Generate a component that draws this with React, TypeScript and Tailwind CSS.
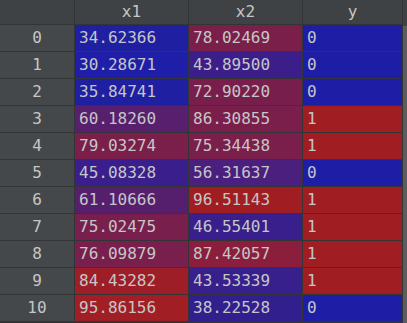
import React from "react";

type Row = [number, string, string, string, string, number];

const BLUE = "#1d1da6";
const RED = "#a01e22";

const rows: Row[] = [
  [0, "34.62366", "#1f1fa2", "78.02469", "#7a1e4a", 0],
  [1, "30.28671", "#1e1ea8", "43.89500", "#3c1e8a", 0],
  [2, "35.84741", "#1f1fa2", "72.90220", "#781e4c", 0],
  [3, "60.18260", "#571f6e", "86.30855", "#7a1f4c", 1],
  [4, "79.03274", "#7a1e4a", "75.34438", "#7a1f4c", 1],
  [5, "45.08328", "#3a1e8c", "56.31637", "#4a1f7e", 0],
  [6, "61.10666", "#561f6e", "96.51143", "#a01e22", 1],
  [7, "75.02475", "#781f4e", "46.55401", "#381f8c", 1],
  [8, "76.09879", "#781f4e", "87.42057", "#8a1e3c", 1],
  [9, "84.43282", "#9e1e28", "43.53339", "#371f8c", 1],
  [10, "95.86156", "#a01e24", "38.22528", "#321f8e", 0],
];

export default function App() {
  return (
    <div
      className="w-[407px] h-[323px] bg-[#3b3e40] flex text-[16px] text-[#c6c6c6] overflow-hidden"
      style={{ fontFamily: '"DejaVu Sans Mono", monospace' }}
    >
      <div className="w-[403px] h-[323px] bg-[#323436]">
        <div className="grid grid-cols-[74px_113px_113px_99px] gap-px pr-px">
          <div className="h-[24px] bg-[#3f4244]" />
          <div className="h-[24px] bg-[#3f4244] flex items-center justify-center leading-none">x1</div>
          <div className="h-[24px] bg-[#3f4244] flex items-center justify-center leading-none">x2</div>
          <div className="h-[24px] bg-[#3f4244] flex items-center justify-center leading-none">y</div>
          {rows.map((r) => (
            <React.Fragment key={r[0]}>
              <div className="h-[26px] bg-[#45484a] flex items-center justify-center leading-none">
                {r[0]}
              </div>
              <div
                className="h-[26px] flex items-center pl-[4px] leading-none"
                style={{ backgroundColor: r[2] }}
              >
                {r[1]}
              </div>
              <div
                className="h-[26px] flex items-center pl-[4px] leading-none"
                style={{ backgroundColor: r[4] }}
              >
                {r[3]}
              </div>
              <div
                className="h-[26px] flex items-center pl-[4px] leading-none"
                style={{ backgroundColor: r[5] ? RED : BLUE }}
              >
                {r[5]}
              </div>
            </React.Fragment>
          ))}
        </div>
      </div>
      <div className="w-[4px] h-[323px] flex flex-col">
        <div className="h-[26px] bg-[#3f4244]" />
        <div className="flex-1 bg-[#5a5c5e]" />
      </div>
    </div>
  );
}
